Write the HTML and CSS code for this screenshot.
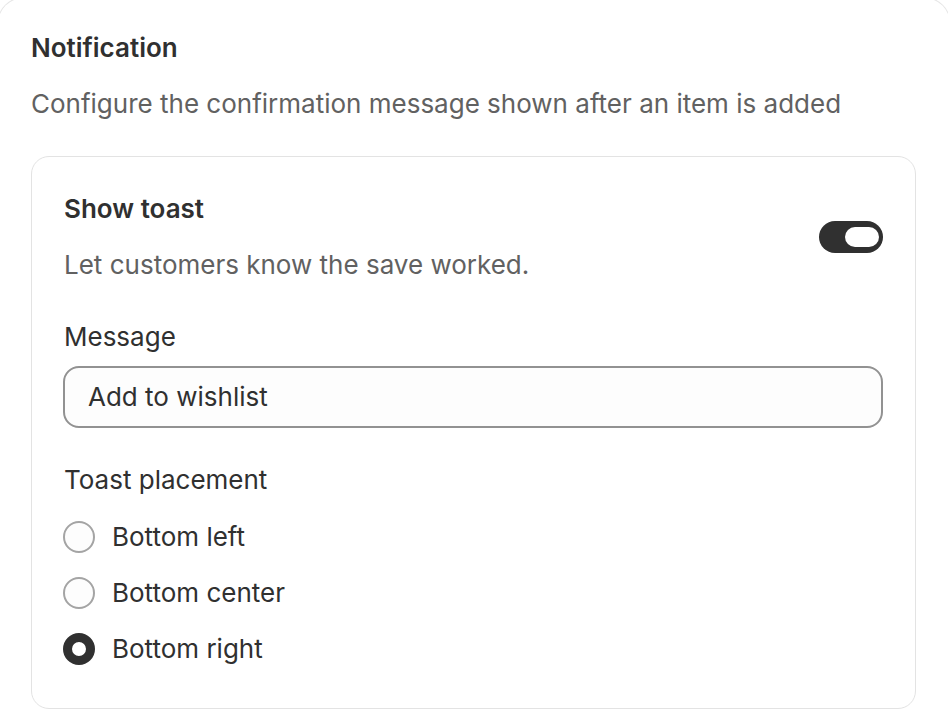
FILE: index.html
```html
<!DOCTYPE html>
<html lang="en">
<head>
<meta charset="utf-8">
<title>Notification</title>
<link rel="stylesheet" href="styles.css">
</head>
<body>
<section class="card">
  <h2 class="card-title">Notification</h2>
  <p class="card-desc">Configure the confirmation message shown after an item is added</p>
  <div class="panel">
    <div class="toggle-row">
      <div class="toggle-text">
        <h3 class="panel-title">Show toast</h3>
        <p class="panel-desc">Let customers know the save worked.</p>
      </div>
      <span class="switch" role="switch" aria-checked="true"><span class="knob"></span></span>
    </div>
    <div class="field">
      <label class="label" for="msg">Message</label>
      <div class="input" id="msg">Add to wishlist</div>
    </div>
    <div class="field">
      <div class="label">Toast placement</div>
      <ul class="radios">
        <li class="radio-row"><span class="radio"></span><span class="radio-label">Bottom left</span></li>
        <li class="radio-row"><span class="radio"></span><span class="radio-label">Bottom center</span></li>
        <li class="radio-row"><span class="radio checked"></span><span class="radio-label">Bottom right</span></li>
      </ul>
    </div>
  </div>
</section>
</body>
</html>
```

FILE: styles.css
```css
html, body {
  margin: 0;
  padding: 0;
  background: #ffffff;
  overflow: hidden;
}
body {
  font-family: Inter, "Noto Sans", "Liberation Sans", sans-serif;
  font-size: 26px;
  line-height: 40px;
  color: #303030;
  width: 948px;
  height: 722px;
}
.card {
  margin: -2px 0 0 -2px;
  width: 952px;
  box-sizing: border-box;
  min-height: 740px;
  padding: 30px 34px 32px 33px;
  background: #ffffff;
  border-radius: 26px;
  box-shadow: 0 0 0 1px #e6e6e6, 0 1px 2px rgba(0,0,0,0.06);
}
.card-title {
  margin: 0;
  font-size: 26px;
  line-height: 40px;
  font-weight: 600;
  color: #303030;
}
.card-desc {
  margin: 16px 0 0;
  color: #616161;
}
.panel {
  margin-top: 32px;
  border: 1px solid #e3e3e3;
  border-radius: 18px;
  padding: 32px 32px 39px 31px;
  display: flex;
  flex-direction: column;
  gap: 32px;
}
.toggle-row {
  display: flex;
  align-items: center;
  justify-content: space-between;
  padding-left: 1px;
}
.panel-title {
  margin: 0;
  font-size: 26px;
  line-height: 40px;
  font-weight: 600;
}
.panel-desc {
  margin: 16px 0 0;
  color: #616161;
}
.switch {
  position: relative;
  width: 64px;
  height: 32px;
  border-radius: 16px;
  background: #303030;
  flex: none;
}
.knob {
  position: absolute;
  right: 4px;
  top: 6px;
  width: 34px;
  height: 20px;
  border-radius: 10px;
  background: #ffffff;
}
.field {
  display: flex;
  flex-direction: column;
}
.label {
  display: block;
  padding-left: 1px;
}
.input {
  margin-top: 9px;
  height: 62px;
  box-sizing: border-box;
  border: 2px solid #929292;
  border-radius: 16px;
  background: #fdfdfd;
  padding: 0 23px;
  display: flex;
  align-items: center;
}
.radios {
  list-style: none;
  margin: 17px 0 0;
  padding: 0;
  display: flex;
  flex-direction: column;
  gap: 16px;
}
.radio-row {
  display: flex;
  align-items: center;
  gap: 17px;
  height: 40px;
}
.radio {
  width: 32px;
  height: 32px;
  box-sizing: border-box;
  border-radius: 50%;
  border: 2px solid #a4a4a4;
  background: #fdfdfd;
  flex: none;
}
.radio.checked {
  border: 9px solid #303030;
  background: #ffffff;
}
```
